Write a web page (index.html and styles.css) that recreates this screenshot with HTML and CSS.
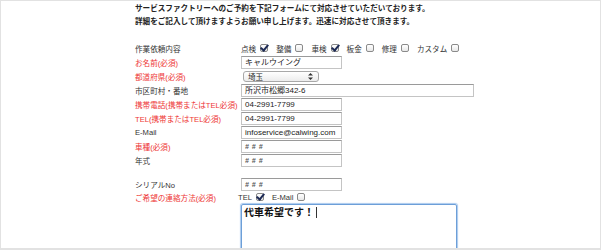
FILE: index.html
```html
<!DOCTYPE html>
<html lang="ja">
<head>
    <meta charset="UTF-8">
    <title>ご予約フォーム</title>
    <link rel="stylesheet" href="styles.css">
</head>
<body>
    <div class="frame">
        <div class="intro">
            <p>サービスファクトリーへのご予約を下記フォームにて対応させていただいております。</p>
            <p>詳細をご記入して頂けますようお願い申し上げます。迅速に対応させて頂きます。</p>
        </div>

        <div class="form">
            <div class="row">
                <div class="label">作業依頼内容</div>
                <div class="field">
                    <span class="opt">点検<span class="box checked"></span></span>
                    <span class="opt">整備<span class="box"></span></span>
                    <span class="opt">車検<span class="box checked"></span></span>
                    <span class="opt">板金<span class="box"></span></span>
                    <span class="opt">修理<span class="box"></span></span>
                    <span class="opt">カスタム<span class="box"></span></span>
                </div>
            </div>
            <div class="row">
                <div class="label req">お名前(必須)</div>
                <div class="field"><div class="input">キャルウイング</div></div>
            </div>
            <div class="row">
                <div class="label req">都道府県(必須)</div>
                <div class="field">
                    <div class="select">
                        <span>埼玉</span>
                        <svg width="5" height="7" viewBox="0 0 5 7"><path d="M2.5 0 L5 2.6 H0 Z M2.5 7 L5 4.4 H0 Z" fill="#333"/></svg>
                    </div>
                </div>
            </div>
            <div class="row">
                <div class="label">市区町村・番地</div>
                <div class="field"><div class="input wide">所沢市松郷342-6</div></div>
            </div>
            <div class="row">
                <div class="label req">携帯電話(携帯またはTEL必須)</div>
                <div class="field"><div class="input">04-2991-7799</div></div>
            </div>
            <div class="row">
                <div class="label req">TEL(携帯またはTEL必須)</div>
                <div class="field"><div class="input">04-2991-7799</div></div>
            </div>
            <div class="row">
                <div class="label">E-Mail</div>
                <div class="field"><div class="input">infoservice@calwing.com</div></div>
            </div>
            <div class="row">
                <div class="label req">車種(必須)</div>
                <div class="field"><div class="input hash"># # #</div></div>
            </div>
            <div class="row">
                <div class="label">年式</div>
                <div class="field"><div class="input hash"># # #</div></div>
            </div>
            <div class="spacer"></div>
            <div class="row">
                <div class="label">シリアルNo</div>
                <div class="field"><div class="input hash"># # #</div></div>
            </div>
            <div class="row contact">
                <div class="label req">ご希望の連絡方法(必須)</div>
                <div class="field shift">
                    <span class="opt">TEL<span class="box checked"></span></span>
                    <span class="opt">E-Mail<span class="box"></span></span>
                </div>
            </div>
            <div class="row">
                <div class="label"></div>
                <div class="field">
                    <div class="textarea">代車希望です！<span class="caret"></span></div>
                </div>
            </div>
        </div>
    </div>
</body>
</html>
```

FILE: styles.css
```css
* {
    margin: 0;
    padding: 0;
    box-sizing: border-box;
}

body {
    background: #fff;
    font-family: "Liberation Sans", "Noto Sans CJK JP", sans-serif;
    color: #333;
}

.frame {
    width: 601px;
    height: 250px;
    border: 1px solid #e2e2e2;
    border-bottom-width: 2px;
    overflow: hidden;
    padding-left: 134px;
}

.intro {
    font-family: "Noto Sans CJK JP", sans-serif;
    font-weight: bold;
    font-size: 7.6px;
    line-height: 13px;
    color: #222;
}

.form {
    margin-top: 14px;
}

.row {
    display: grid;
    grid-template-columns: 106px 1fr;
    height: 14px;
    align-items: center;
    font-size: 7.6px;
}

.row.contact {
    height: 12px;
}

.spacer {
    height: 10px;
}

.label {
    white-space: nowrap;
    color: #333;
}

.label.req {
    color: #ee3535;
}

.field {
    display: flex;
    align-items: center;
}

.field.shift {
    margin-left: -3px;
}

.opt {
    display: inline-flex;
    align-items: center;
    margin-right: 8px;
    color: #333;
}

.box {
    position: relative;
    display: inline-block;
    width: 8px;
    height: 8px;
    margin-left: 4px;
    border: 1px solid #8a8a8a;
    border-radius: 2px;
    background: linear-gradient(#fff, #e8e8e8);
}

.box.checked::after {
    content: "";
    position: absolute;
    left: 1px;
    top: -2px;
    width: 3px;
    height: 6px;
    border-right: 2px solid #1d2a55;
    border-bottom: 2px solid #1d2a55;
    transform: rotate(40deg);
}

.input {
    width: 101px;
    height: 13px;
    border: 1px solid #c4c4c4;
    border-top-color: #9a9a9a;
    padding-left: 3px;
    line-height: 11px;
    font-size: 8px;
    color: #222;
    white-space: nowrap;
    overflow: hidden;
}

.input.wide {
    width: 233px;
}

.input.hash {
    font-size: 7px;
    font-style: italic;
    font-weight: bold;
    color: #555;
    letter-spacing: 0.5px;
}

.select {
    width: 76px;
    height: 11px;
    margin-left: 2px;
    border: 1px solid #a8a8a8;
    border-radius: 3px;
    background: linear-gradient(#ffffff, #ececec);
    display: flex;
    align-items: center;
    justify-content: space-between;
    padding: 0 5px 0 4px;
    font-size: 7.5px;
    color: #222;
}

.textarea {
    width: 216px;
    height: 80px;
    margin-top: 1px;
    align-self: flex-start;
    border: 1px solid #6d9fd8;
    box-shadow: 0 0 1px 1px #a9c9ee;
    border-radius: 2px;
    padding: 1px 2px;
    font-family: "Noto Sans CJK JP", sans-serif;
    font-size: 10px;
    font-weight: bold;
    line-height: 12px;
    color: #111;
}

.caret {
    display: inline-block;
    width: 1px;
    height: 11px;
    margin-left: 2px;
    vertical-align: -2px;
    background: #333;
}
```
